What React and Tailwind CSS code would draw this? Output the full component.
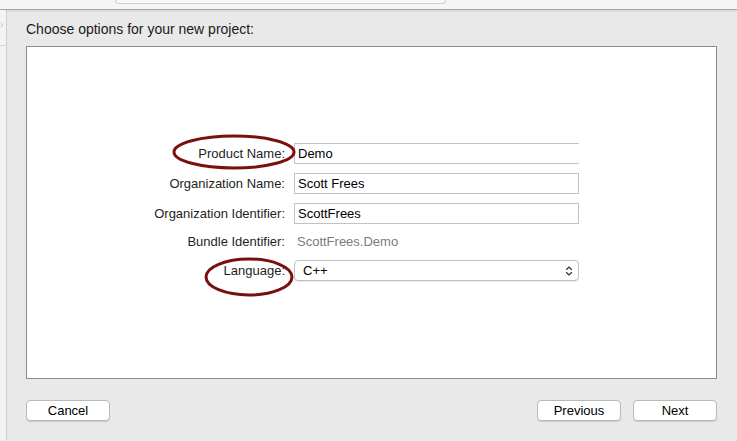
import { ChevronsUpDown } from "lucide-react";

const FONT = { fontFamily: '"Liberation Sans", Arial, sans-serif' };

function Field({ value }) {
  return (
    <div className="flex h-[21px] w-[285px] items-center border border-[#c3c3c3] bg-white px-[3px] text-[13px] text-black">
      {value}
    </div>
  );
}

function Row({ label, children, tall = true }) {
  return (
    <div className={`flex items-center ${tall ? "h-[21px]" : "h-[18px]"}`}>
      <div className="w-[151px] pr-[9px] text-right text-[13px] text-[#1e1e1e]">{label}</div>
      {children}
    </div>
  );
}

function MacButton({ children }) {
  return (
    <button
      type="button"
      className="h-[21px] w-[84px] rounded-[4px] border border-[#b9b9b9] bg-white text-[13px] leading-none text-black shadow-[0_1px_0_rgba(0,0,0,0.12)]"
    >
      {children}
    </button>
  );
}

export default function App() {
  return (
    <div className="relative h-[441px] w-[737px] overflow-hidden bg-[#e9e9e9]" style={FONT}>
      {/* toolbar edge */}
      <div className="h-[10px] border-b border-[#a6a6a6] bg-[#f5f5f5] pl-[115px] shadow-[0_1px_2px_rgba(0,0,0,0.12)]">
        <div className="h-[4px] w-[331px] rounded-b-[4px] border border-t-0 border-[#cfcfcf] bg-[#f8f8f8]" />
      </div>

      <div className="flex h-[430px]">
        {/* side strip */}
        <div className="flex w-[7px] flex-col border-r border-[#cdcdcd] bg-[#f3f3f3]">
          <div className="mt-[9px] text-[11px] leading-none text-[#c9c9c9]">›</div>
          <div className="mt-[15px] border-b border-[#d4d4d4]" />
        </div>

        {/* main sheet */}
        <div className="flex flex-1 flex-col pl-[19px] pr-[20px]">
          <p className="mt-[11px] h-[25px] text-[14px] leading-[17px] text-[#1a1a1a]">
            Choose options for your new project:
          </p>

          <div className="h-[333px] border border-[#8c8c8c] bg-white pl-[116px] pt-[96px]">
            <div className="flex flex-col gap-[9px]">
              <Row label="Product Name:">
                <div className="flex h-[21px] w-[285px] items-center border border-r-0 border-[#c3c3c3] bg-white px-[3px] text-[13px] text-black">
                  Demo
                </div>
              </Row>
              <Row label="Organization Name:">
                <Field value="Scott Frees" />
              </Row>
              <Row label="Organization Identifier:">
                <Field value="ScottFrees" />
              </Row>
              <Row label="Bundle Identifier:" tall={false}>
                <span className="pl-[3px] text-[13px] text-[#7b7b7b]">ScottFrees.Demo</span>
              </Row>
              <Row label="Language:">
                <div className="flex h-[21px] w-[285px] items-center justify-between rounded-[4px] border border-[#c0c0c0] bg-white pl-[8px] pr-[3px] text-[13px] text-black shadow-[0_1px_0_rgba(0,0,0,0.08)]">
                  <span>C++</span>
                  <ChevronsUpDown size={12} strokeWidth={2.2} className="text-[#333]" />
                </div>
              </Row>
            </div>
          </div>

          <div className="mt-[21px] flex justify-between">
            <MacButton>Cancel</MacButton>
            <div className="flex gap-[12px]">
              <MacButton>Previous</MacButton>
              <MacButton>Next</MacButton>
            </div>
          </div>
        </div>
      </div>

      {/* annotation ellipses */}
      <svg className="pointer-events-none absolute left-0 top-0" width="737" height="441">
        <ellipse cx="234" cy="152" rx="60" ry="16" fill="none" stroke="#7a0f0f" strokeWidth="3" />
        <ellipse cx="249" cy="277" rx="43" ry="18" fill="none" stroke="#7a0f0f" strokeWidth="3" />
      </svg>
    </div>
  );
}
